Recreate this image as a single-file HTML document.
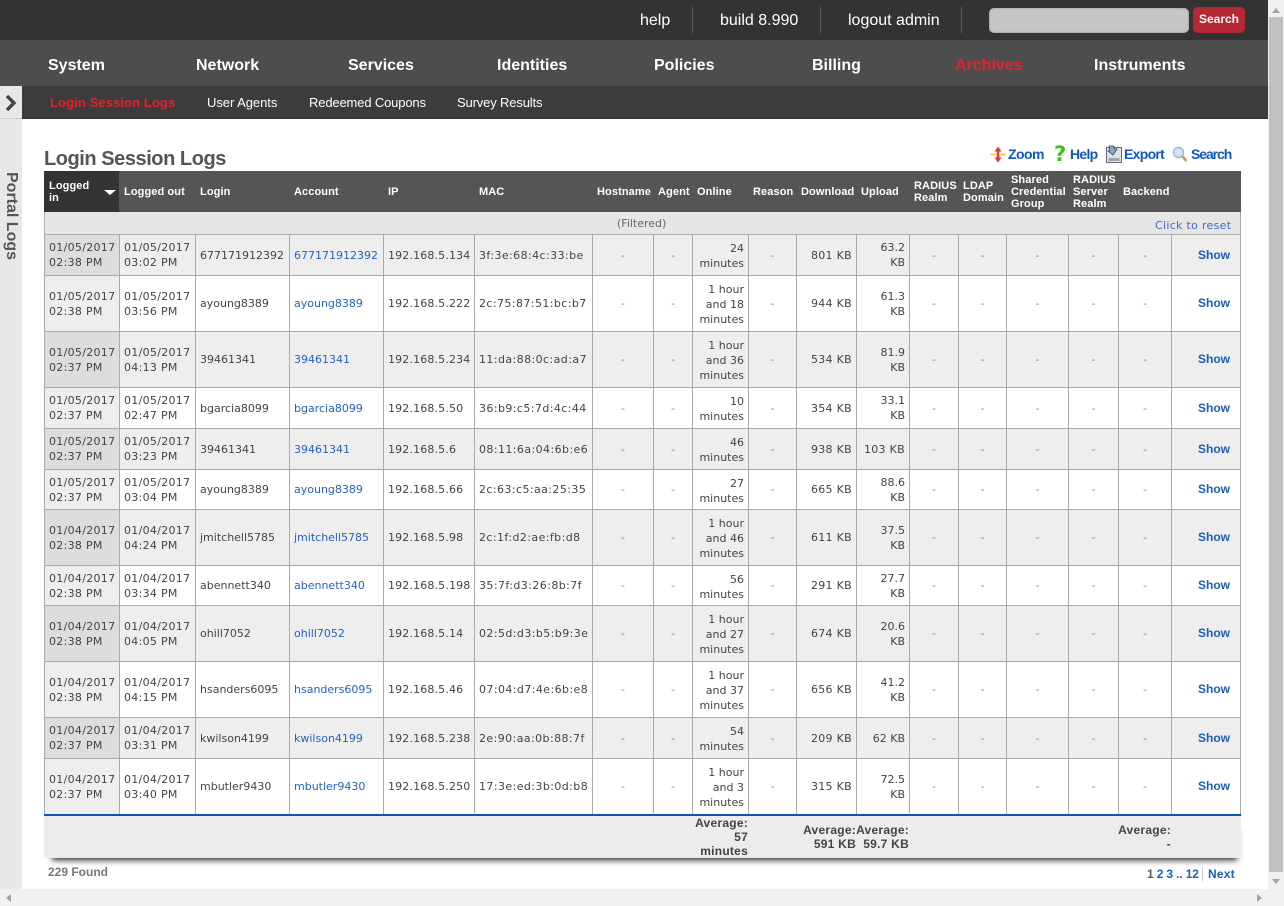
<!DOCTYPE html>
<html>
<head>
<meta charset="utf-8">
<title>Login Session Logs</title>
<style>
html,body{margin:0;padding:0;width:1284px;height:906px;overflow:hidden;background:#fff}
body{position:relative;font-family:"Liberation Sans",Arial,sans-serif}
.a{position:absolute;white-space:nowrap}
.top{left:0;top:0;width:1268px;height:40px;background:#333}
.nav{left:0;top:40px;width:1268px;height:46px;background:#4d4d4d}
.sub{left:22px;top:86px;width:1246px;height:33px;background:#3c3c3c;border-bottom:1px solid #2e2e2e;box-sizing:border-box}
.tl{top:11px;font-size:16px;line-height:19px;color:#fff}
.sep{top:7px;width:1px;height:26px;background:#5a5a5a}
.n{top:56px;font-size:16px;line-height:19px;font-weight:bold;color:#fff}
.s{top:95px;font-size:13px;line-height:16px;color:#fff;letter-spacing:-.15px}
.side{left:0;top:86px;width:22px;height:803px;background:#e8e8e8}
.tools{top:146px;font-size:14px;line-height:16px;font-weight:bold;color:#1259bd;letter-spacing:-.7px}
table{position:absolute;left:44px;top:171px;width:1196px;border-collapse:collapse;table-layout:fixed;font-family:"DejaVu Sans",Verdana,sans-serif;font-size:11px;line-height:15px;color:#444}
th{background:#555;color:#fff;font:bold 11px/12px "Liberation Sans",Arial,sans-serif;text-align:left;padding:0 4px;height:39px;border:1px solid #555;letter-spacing:.1px}
th.f{background:#333;border-color:#333;border-right:0;position:relative}
th.f i{position:absolute;right:3px;top:18px;width:0;height:0;border-left:6px solid transparent;border-right:6px solid transparent;border-top:5px solid #fff}
td{border:1px solid #aaa;padding:0 4px;white-space:nowrap;overflow:hidden;vertical-align:middle}
td.r{text-align:right}
td.c{text-align:center;color:#888}
td a{color:#2563bd}
td:nth-child(1),td:nth-child(2){letter-spacing:.3px}
td:nth-child(5){letter-spacing:.15px}
td:nth-child(6){letter-spacing:.42px}
td:nth-child(9){padding-top:2px}
td:nth-child(11){letter-spacing:.3px}
td.sh{text-align:right;padding:0 10px 1px 4px;font:bold 12px "Liberation Sans",Arial,sans-serif;color:#1d5fb5}
td.d{background:#eee}
tr.o td{background:#eee}
tr.o td.d{background:#ddd}
tr.fl td{background:#e6e6e6;height:22px;padding:0}
.av{font-size:12px;line-height:14px;font-weight:bold;color:#444;text-align:right;letter-spacing:.25px}
</style>
</head>
<body>
<div class="a top"></div>
<span class="a tl" style="left:640px">help</span>
<div class="a sep" style="left:692px"></div>
<span class="a tl" style="left:720px">build 8.990</span>
<div class="a sep" style="left:820px"></div>
<span class="a tl" style="left:848px">logout admin</span>
<div class="a sep" style="left:961px"></div>
<div class="a" style="left:989px;top:8px;width:200px;height:25px;background:#c6c6c6;border-radius:5px;box-shadow:inset 0 0 2px #888"></div>
<div class="a" style="left:1193px;top:7px;width:52px;height:26px;background:#b42733;border-radius:5px;color:#fff;font-size:12px;font-weight:bold;line-height:25px;text-align:center">Search</div>

<div class="a nav"></div>
<span class="a n" style="left:48px">System</span>
<span class="a n" style="left:196px">Network</span>
<span class="a n" style="left:348px">Services</span>
<span class="a n" style="left:497px">Identities</span>
<span class="a n" style="left:654px">Policies</span>
<span class="a n" style="left:812px">Billing</span>
<span class="a n" style="left:955px;color:#e3222b">Archives</span>
<span class="a n" style="left:1094px">Instruments</span>

<div class="a sub"></div>
<span class="a s" style="left:50px;color:#e3222b;font-weight:bold;letter-spacing:.1px">Login Session Logs</span>
<span class="a s" style="left:207px;letter-spacing:-.05px">User Agents</span>
<span class="a s" style="left:309px">Redeemed Coupons</span>
<span class="a s" style="left:457px">Survey Results</span>

<div class="a side"></div>
<div class="a" style="left:0;top:118px;width:22px;height:1px;background:#ccc"></div>
<svg class="a" style="left:4px;top:94px" width="16" height="18" viewBox="0 0 16 18"><path d="M3 2 L10 9 L3 16" fill="none" stroke="#444" stroke-width="3.4"/></svg>
<div class="a" style="left:2px;top:172px;font-size:16px;line-height:19px;font-weight:bold;color:#555;writing-mode:vertical-rl">Portal Logs</div>

<div class="a" style="left:44px;top:148px;font-size:20px;line-height:23px;font-weight:bold;color:#555;letter-spacing:-.45px">Login Session Logs</div>

<svg class="a" style="left:990px;top:146px" width="16" height="17" viewBox="0 0 16 17"><path d="M0.5 8.5h5M10.5 8.5h5" stroke="#f5d327" stroke-width="2"/><path d="M8 0.5l3.5 5H9.3v6h2.2l-3.5 5-3.5-5h2.2v-6H4.500z" fill="#e5392b"/></svg>
<span class="a tools" style="left:1008px;letter-spacing:-.55px">Zoom</span>
<span class="a" style="left:1054px;top:142px;font:bold 21px/24px 'DejaVu Sans',sans-serif;color:#3fc01c">?</span>
<span class="a tools" style="left:1070px">Help</span>
<svg class="a" style="left:1106px;top:145px" width="16" height="18" viewBox="0 0 16 18"><rect x="0.5" y="2.500" width="15" height="15" fill="#dfe3e6" stroke="#667"/><rect x="2.500" y="13" width="11" height="3" fill="#9aa"/><path d="M3 1h5v3h3l-4 6-5-4h2z" fill="#7fb0d8" stroke="#345" stroke-width=".8"/></svg>
<span class="a tools" style="left:1124px">Export</span>
<svg class="a" style="left:1172px;top:146px" width="16" height="17" viewBox="0 0 16 17"><circle cx="6.500" cy="6.500" r="5" fill="#d6e6f6" stroke="#9db8d4" stroke-width="1.500"/><path d="M10.500 10.500l4 4.500" stroke="#c99a55" stroke-width="2.600"/></svg>
<span class="a tools" style="left:1191px;letter-spacing:-1.08px">Search</span>

<table>
<colgroup><col style="width:75px"><col style="width:76px"><col style="width:94px"><col style="width:94px"><col style="width:91px"><col style="width:118px"><col style="width:61px"><col style="width:39px"><col style="width:56px"><col style="width:48px"><col style="width:60px"><col style="width:53px"><col style="width:49px"><col style="width:48px"><col style="width:62px"><col style="width:50px"><col style="width:53px"><col style="width:69px"></colgroup>
<tr><th class="f">Logged<br>in<i></i></th><th>Logged out</th><th>Login</th><th>Account</th><th>IP</th><th>MAC</th><th>Hostname</th><th>Agent</th><th>Online</th><th>Reason</th><th>Download</th><th>Upload</th><th>RADIUS<br>Realm</th><th>LDAP<br>Domain</th><th>Shared<br>Credential<br>Group</th><th>RADIUS<br>Server<br>Realm</th><th>Backend</th><th></th></tr>
<tr class="fl"><td colspan="18"></td></tr>
<tr class="o" style="height:41px"><td class="d">01/05/2017<br>02:38 PM</td><td>01/05/2017<br>03:02 PM</td><td>677171912392</td><td><a>677171912392</a></td><td>192.168.5.134</td><td>3f:3e:68:4c:33:be</td><td class="c">-</td><td class="c">-</td><td class="r">24<br>minutes</td><td class="c">-</td><td class="r">801 KB</td><td class="r">63.2<br>KB</td><td class="c">-</td><td class="c">-</td><td class="c">-</td><td class="c">-</td><td class="c">-</td><td class="sh">Show</td></tr>
<tr style="height:56px"><td class="d">01/05/2017<br>02:38 PM</td><td>01/05/2017<br>03:56 PM</td><td>ayoung8389</td><td><a>ayoung8389</a></td><td>192.168.5.222</td><td>2c:75:87:51:bc:b7</td><td class="c">-</td><td class="c">-</td><td class="r">1 hour<br>and 18<br>minutes</td><td class="c">-</td><td class="r">944 KB</td><td class="r">61.3<br>KB</td><td class="c">-</td><td class="c">-</td><td class="c">-</td><td class="c">-</td><td class="c">-</td><td class="sh">Show</td></tr>
<tr class="o" style="height:56px"><td class="d">01/05/2017<br>02:37 PM</td><td>01/05/2017<br>04:13 PM</td><td>39461341</td><td><a>39461341</a></td><td>192.168.5.234</td><td>11:da:88:0c:ad:a7</td><td class="c">-</td><td class="c">-</td><td class="r">1 hour<br>and 36<br>minutes</td><td class="c">-</td><td class="r">534 KB</td><td class="r">81.9<br>KB</td><td class="c">-</td><td class="c">-</td><td class="c">-</td><td class="c">-</td><td class="c">-</td><td class="sh">Show</td></tr>
<tr style="height:41px"><td class="d">01/05/2017<br>02:37 PM</td><td>01/05/2017<br>02:47 PM</td><td>bgarcia8099</td><td><a>bgarcia8099</a></td><td>192.168.5.50</td><td>36:b9:c5:7d:4c:44</td><td class="c">-</td><td class="c">-</td><td class="r">10<br>minutes</td><td class="c">-</td><td class="r">354 KB</td><td class="r">33.1<br>KB</td><td class="c">-</td><td class="c">-</td><td class="c">-</td><td class="c">-</td><td class="c">-</td><td class="sh">Show</td></tr>
<tr class="o" style="height:41px"><td class="d">01/05/2017<br>02:37 PM</td><td>01/05/2017<br>03:23 PM</td><td>39461341</td><td><a>39461341</a></td><td>192.168.5.6</td><td>08:11:6a:04:6b:e6</td><td class="c">-</td><td class="c">-</td><td class="r">46<br>minutes</td><td class="c">-</td><td class="r">938 KB</td><td class="r" style="letter-spacing:.3px">103 KB</td><td class="c">-</td><td class="c">-</td><td class="c">-</td><td class="c">-</td><td class="c">-</td><td class="sh">Show</td></tr>
<tr style="height:40px"><td class="d">01/05/2017<br>02:37 PM</td><td>01/05/2017<br>03:04 PM</td><td>ayoung8389</td><td><a>ayoung8389</a></td><td>192.168.5.66</td><td>2c:63:c5:aa:25:35</td><td class="c">-</td><td class="c">-</td><td class="r">27<br>minutes</td><td class="c">-</td><td class="r">665 KB</td><td class="r">88.6<br>KB</td><td class="c">-</td><td class="c">-</td><td class="c">-</td><td class="c">-</td><td class="c">-</td><td class="sh">Show</td></tr>
<tr class="o" style="height:56px"><td class="d">01/04/2017<br>02:38 PM</td><td>01/04/2017<br>04:24 PM</td><td>jmitchell5785</td><td><a>jmitchell5785</a></td><td>192.168.5.98</td><td>2c:1f:d2:ae:fb:d8</td><td class="c">-</td><td class="c">-</td><td class="r">1 hour<br>and 46<br>minutes</td><td class="c">-</td><td class="r">611 KB</td><td class="r">37.5<br>KB</td><td class="c">-</td><td class="c">-</td><td class="c">-</td><td class="c">-</td><td class="c">-</td><td class="sh">Show</td></tr>
<tr style="height:40px"><td class="d">01/04/2017<br>02:38 PM</td><td>01/04/2017<br>03:34 PM</td><td>abennett340</td><td><a>abennett340</a></td><td>192.168.5.198</td><td>35:7f:d3:26:8b:7f</td><td class="c">-</td><td class="c">-</td><td class="r">56<br>minutes</td><td class="c">-</td><td class="r">291 KB</td><td class="r">27.7<br>KB</td><td class="c">-</td><td class="c">-</td><td class="c">-</td><td class="c">-</td><td class="c">-</td><td class="sh">Show</td></tr>
<tr class="o" style="height:56px"><td class="d">01/04/2017<br>02:38 PM</td><td>01/04/2017<br>04:05 PM</td><td>ohill7052</td><td><a>ohill7052</a></td><td>192.168.5.14</td><td>02:5d:d3:b5:b9:3e</td><td class="c">-</td><td class="c">-</td><td class="r">1 hour<br>and 27<br>minutes</td><td class="c">-</td><td class="r">674 KB</td><td class="r">20.6<br>KB</td><td class="c">-</td><td class="c">-</td><td class="c">-</td><td class="c">-</td><td class="c">-</td><td class="sh">Show</td></tr>
<tr style="height:56px"><td class="d">01/04/2017<br>02:38 PM</td><td>01/04/2017<br>04:15 PM</td><td>hsanders6095</td><td><a>hsanders6095</a></td><td>192.168.5.46</td><td>07:04:d7:4e:6b:e8</td><td class="c">-</td><td class="c">-</td><td class="r">1 hour<br>and 37<br>minutes</td><td class="c">-</td><td class="r">656 KB</td><td class="r">41.2<br>KB</td><td class="c">-</td><td class="c">-</td><td class="c">-</td><td class="c">-</td><td class="c">-</td><td class="sh">Show</td></tr>
<tr class="o" style="height:41px"><td class="d">01/04/2017<br>02:37 PM</td><td>01/04/2017<br>03:31 PM</td><td>kwilson4199</td><td><a>kwilson4199</a></td><td>192.168.5.238</td><td>2e:90:aa:0b:88:7f</td><td class="c">-</td><td class="c">-</td><td class="r">54<br>minutes</td><td class="c">-</td><td class="r">209 KB</td><td class="r">62 KB</td><td class="c">-</td><td class="c">-</td><td class="c">-</td><td class="c">-</td><td class="c">-</td><td class="sh">Show</td></tr>
<tr style="height:56px"><td class="d">01/04/2017<br>02:37 PM</td><td>01/04/2017<br>03:40 PM</td><td>mbutler9430</td><td><a>mbutler9430</a></td><td>192.168.5.250</td><td>17:3e:ed:3b:0d:b8</td><td class="c">-</td><td class="c">-</td><td class="r">1 hour<br>and 3<br>minutes</td><td class="c">-</td><td class="r">315 KB</td><td class="r">72.5<br>KB</td><td class="c">-</td><td class="c">-</td><td class="c">-</td><td class="c">-</td><td class="c">-</td><td class="sh">Show</td></tr>
</table>
<span class="a" style="left:1155px;top:219px;font:11px/14px 'DejaVu Sans',sans-serif;color:#3f6cc4;letter-spacing:.3px">Click to reset</span>
<span class="a" style="left:617px;top:217px;font:11px/14px 'DejaVu Sans',sans-serif;color:#666">(Filtered)</span>

<div class="a" style="left:44px;top:814px;width:1197px;height:44px;background:#ececec;border-top:2px solid #0a55b0;box-sizing:border-box;box-shadow:2px 8px 6px -6px #222"></div>
<div class="a av" style="right:536px;top:816px">Average:<br>57<br>minutes</div>
<div class="a av" style="right:428px;top:823px">Average:<br>591 KB</div>
<div class="a av" style="right:375px;top:823px">Average:<br>59.7 KB</div>
<div class="a av" style="right:113px;top:823px">Average:<br>-</div>

<span class="a" style="left:48px;top:865px;font-size:12px;line-height:15px;font-weight:bold;color:#777">229 Found</span>
<span class="a" style="left:1147px;top:867px;font-size:12px;line-height:15px;font-weight:bold;color:#1a5fbb;letter-spacing:-.15px"><span style="color:#556">1</span> 2 3 <span style="color:#556">..</span> 12</span>
<div class="a" style="left:1202px;top:867px;width:1px;height:14px;background:#ccc"></div>
<span class="a" style="left:1208px;top:867px;font-size:12px;line-height:15px;font-weight:bold;color:#1a5fbb;letter-spacing:.2px">Next</span>

<div class="a" style="left:1268px;top:0;width:16px;height:889px;background:#f1f1f1"></div>
<div class="a" style="left:1269px;top:17px;width:14px;height:855px;background:#c1c1c1"></div>
<div class="a" style="left:1272px;top:8px;border-left:4px solid transparent;border-right:4px solid transparent;border-bottom:5px solid #a3a3a3"></div>
<div class="a" style="left:1272px;top:879px;border-left:4px solid transparent;border-right:4px solid transparent;border-top:5px solid #a3a3a3"></div>
<div class="a" style="left:0;top:889px;width:1284px;height:17px;background:#f1f1f1"></div>
<div class="a" style="left:6px;top:894px;border-top:4px solid transparent;border-bottom:4px solid transparent;border-right:5px solid #a3a3a3"></div>
<div class="a" style="left:1257px;top:894px;border-top:4px solid transparent;border-bottom:4px solid transparent;border-left:5px solid #a3a3a3"></div>
</body>
</html>
